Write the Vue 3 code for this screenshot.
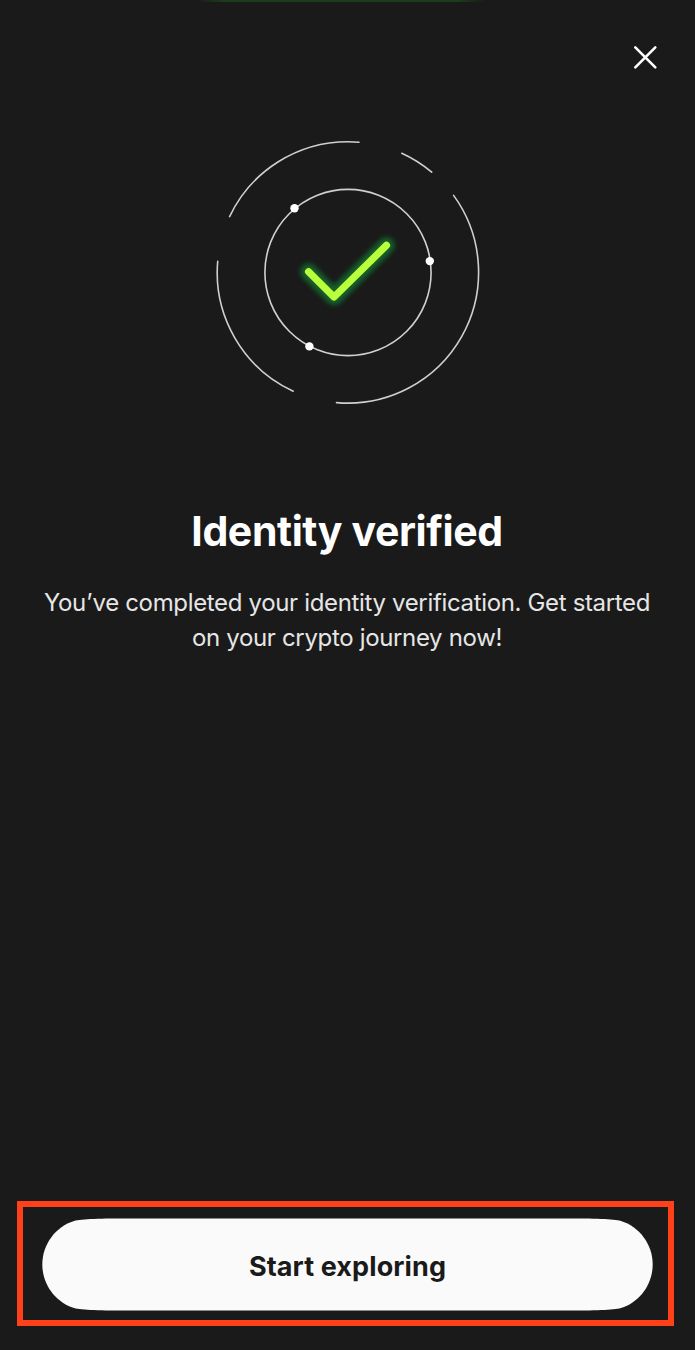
<script setup>
const dots = [
  { x: 294.5, y: 208.2 },
  { x: 429.8, y: 261.1 },
  { x: 309.4, y: 346.4 },
]
</script>

<template>
  <main class="screen">
    <div class="glow"></div>
    <header class="bar">
      <button class="close" aria-label="Close">
        <svg width="30" height="30" viewBox="0 0 30 30">
          <path d="M5.3 5.4 25.3 25.4M25.3 5.4 5.3 25.4" />
        </svg>
      </button>
    </header>

    <svg class="badge" width="300" height="300" viewBox="198 122 300 300">
      <defs>
        <filter id="soft" x="-30%" y="-50%" width="160%" height="200%">
          <feGaussianBlur stdDeviation="2.4" />
        </filter>
      </defs>
      <g class="ring">
        <circle cx="348" cy="272.5" r="83.1" />
        <path d="M229.6 216.6A130.8 130.8 0 0 1 348 141.7Q353.6 141.7 359 142.2" />
        <path d="M401.8 153.3A130.8 130.8 0 0 1 431.7 172.2" />
        <path d="M453.6 195.4A130.8 130.8 0 0 1 336.5 402.6" />
        <path d="M293.2 391.2A130.8 130.8 0 0 1 217.7 261.2" />
      </g>
      <circle v-for="d in dots" :key="d.x" class="dot" :cx="d.x" :cy="d.y" r="4.2" />
      <path class="halo" d="M308.6 271.8 334 297 386.4 245.4" filter="url(#soft)" />
      <path class="check" d="M308.6 271.8 334 297 386.4 245.4" />
    </svg>

    <h1 class="title">Identity verified</h1>
    <p class="message">
      You’ve completed your identity verification. Get started<br />
      on your crypto journey now!
    </p>

    <div class="highlight">
      <button class="cta">
        <svg class="pill" width="611" height="93" viewBox="0 0 611 93">
          <path d="M90 .5H521C553 .5 571 .7 579 3C597 8.5 610.7 26 610.7 46.5C610.7 67 597 84.5 579 90C571 92.3 553 92.5 521 92.5H90C58 92.5 40 92.3 32 90C14 84.5 .3 67 .3 46.5C.3 26 14 8.5 32 3C40 .7 58 .5 90 .5Z" />
        </svg>
        <span class="label">Start exploring</span>
      </button>
    </div>
  </main>
</template>

<style>
html, body { margin: 0; background: #1a1a1a; }
</style>

<style scoped>
.screen {
  display: flex;
  flex-direction: column;
  align-items: center;
  box-sizing: border-box;
  width: 695px;
  height: 1350px;
  overflow: hidden;
  background: #1a1a1a;
  color: #fff;
  font-family: Inter, "Liberation Sans", sans-serif;
}
.glow {
  width: 290px;
  height: 2px;
  flex: none;
  margin-right: 14px;
  background: linear-gradient(90deg, #1a1a1a, #1b3d1b 10%, #1b3d1b 90%, #1a1a1a);
}
.bar {
  display: flex;
  justify-content: flex-end;
  flex: none;
  box-sizing: border-box;
  width: 100%;
  height: 120px;
  padding: 40px 35px 0 0;
}
button {
  padding: 0;
  border: 0;
  background: none;
  font-family: inherit;
}
.close { width: 30px; height: 30px; }
.close svg { display: block; }
.close path { fill: none; stroke: #fff; stroke-width: 2.6; stroke-linecap: round; }
.badge { display: block; flex: none; margin-left: 1px; }
.ring { fill: none; stroke: #d0d0d0; stroke-width: 1.6; stroke-linecap: round; }
.dot { fill: #fff; }
.halo, .check { fill: none; stroke-linecap: round; stroke-linejoin: round; }
.halo { stroke: #12602c; stroke-width: 16.5; }
.check { stroke: #baff3b; stroke-width: 7.2; }
.title {
  margin: 84px 1px 0 0;
  font-size: 41px;
  line-height: 50px;
  font-weight: 700;
  letter-spacing: -0.4px;
  white-space: nowrap;
}
.message {
  margin: 29px 1px 0 0;
  font-size: 24px;
  line-height: 35.3px;
  letter-spacing: -0.34px;
  text-align: center;
  color: #e6e6e6;
  white-space: nowrap;
}
.highlight {
  display: flex;
  justify-content: center;
  align-items: center;
  box-sizing: border-box;
  width: 657px;
  height: 125px;
  margin: auto 0 24px -4px;
  border: 6px solid #ff4019;
}
.cta {
  display: grid;
  place-items: center;
  width: 611px;
  height: 93px;
  margin: 2px 0 0 4px;
}
.pill, .label { grid-area: 1 / 1; }
.pill { fill: #fafafa; }
.label {
  padding-top: 4px;
  font-size: 27px;
  line-height: 34px;
  font-weight: 700;
  letter-spacing: 0.1px;
  color: #1a1a1a;
}
</style>
